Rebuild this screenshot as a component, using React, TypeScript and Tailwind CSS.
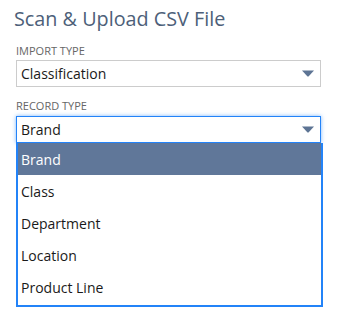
import { useState } from 'react';

const options = ['Brand', 'Class', 'Department', 'Location', 'Product Line'];

const Arrow = () => (
	<svg width="12" height="7" viewBox="0 0 12 7" className="shrink-0">
		<path d="M0 0.5 L12 0.5 L6.5 6.5 L5.5 6.5 Z" fill="#5d7494" />
	</svg>
);

export default function App() {
	const [selected] = useState('Brand');

	return (
		<div className="w-[359px] h-[314px] bg-white font-['Open_Sans',sans-serif] overflow-hidden">
			<div className="pt-[5px] pl-[14px]">
				<h1 className="text-[19.8px] leading-[28px] text-[#4d5f79]">Scan &amp; Upload CSV File</h1>
			</div>

			<div className="pl-[16px] pt-[11px] w-[321px]">
				<div className="text-[11px] leading-[14px] uppercase text-[#666]">Import Type</div>
				<div className="mt-[2px] h-[27px] border border-[#cccccc] flex items-center justify-between pl-[4px] pr-[6px]">
					<span className="text-[14px] text-[#1a1a1a]">Classification</span>
					<Arrow />
				</div>

				<div className="mt-[12px] text-[11px] leading-[14px] uppercase text-[#666]">Record Type</div>
				<div className="mt-[3px] relative">
					<div className="h-[27px] w-[305px] border border-[#2383f8] shadow-[0_0_4px_rgba(35,131,248,0.6)] flex items-center justify-between pl-[4px] pr-[6px]">
						<span className="text-[14px] text-[#1a1a1a]">{selected}</span>
						<Arrow />
					</div>
					<ul className="w-[307px] border-2 border-t-0 border-[#2383f8] pb-[2px]">
						{options.map(o => (
							<li
								key={o}
								className={`h-[32px] flex items-center pl-[3px] text-[14px] ${o === selected ? 'bg-[#607799] text-white' : 'text-[#1a1a1a]'}`}
							>
								{o}
							</li>
						))}
					</ul>
				</div>
			</div>
		</div>
	);
}
